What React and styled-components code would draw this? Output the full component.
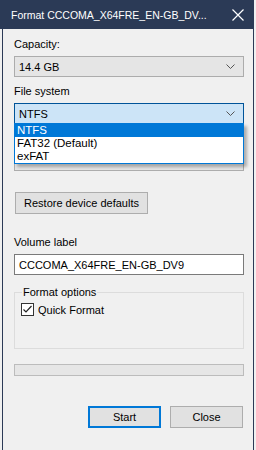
import React from 'react';
import styled, { createGlobalStyle } from 'styled-components';

const GlobalStyle = createGlobalStyle`
  html, body {
    margin: 0;
    padding: 0;
    background: #f0f0f0;
  }
  body {
    font-family: "Liberation Sans", Arial, sans-serif;
    font-size: 11px;
    color: #000;
  }
`;

const Window = styled.div`
  width: 252px;
  height: 450px;
  box-sizing: border-box;
  margin-left: 2px;
  border-left: 1px solid #2b3a56;
  border-right: 1px solid #2b3a56;
  background: #f0f0f0;
  display: flex;
  flex-direction: column;
`;

const TitleBar = styled.div`
  height: 29px;
  margin-left: -3px;
  margin-right: -1px;
  background: #2b3a56;
  color: #fff;
  display: flex;
  align-items: center;
  justify-content: space-between;
  padding: 0 10px 0 11px;
  font-size: 10.5px;
  white-space: nowrap;
`;

const Body = styled.div`
  padding: 7px 9px 0 11px;
  display: flex;
  flex-direction: column;
  position: relative;
`;

const Label = styled.div`
  height: 17px;
  line-height: 17px;
  margin-top: ${(p) => p.$top || 0}px;
  margin-bottom: 3px;
  visibility: ${(p) => (p.$covered ? 'hidden' : 'visible')};
`;

const Combo = styled.div`
  height: 21px;
  box-sizing: border-box;
  border: 1px solid ${(p) => (p.$focused ? '#005499' : '#acacac')};
  background: ${(p) => (p.$focused ? '#cce4f7' : '#e5e5e5')};
  display: flex;
  align-items: center;
  justify-content: space-between;
  padding: 0 8px 0 4px;
`;

const DropList = styled.div`
  position: absolute;
  left: 11px;
  right: 9px;
  top: 94px;
  box-sizing: border-box;
  border: 1px solid #0078d7;
  background: #fff;
  box-shadow: 3px 3px 3px rgba(0, 0, 0, 0.28);
  z-index: 2;
`;

const Option = styled.div`
  height: 13px;
  line-height: 13px;
  padding-left: 2px;
  font-size: 11.5px;
  background: ${(p) => (p.$selected ? '#0078d7' : 'transparent')};
  color: ${(p) => (p.$selected ? '#fff' : '#000')};
`;

const Button = styled.button`
  font: inherit;
  height: 22px;
  box-sizing: border-box;
  border: ${(p) => (p.$default ? '2px solid #0078d7' : '1px solid #adadad')};
  background: #e1e1e1;
  color: #000;
  padding: 0;
  width: ${(p) => p.$width}px;
`;

const RestoreRow = styled.div`
  margin-top: 21px;
  display: flex;
  padding-left: 1px;
`;

const TextInput = styled.div`
  height: 21px;
  box-sizing: border-box;
  border: 1px solid #7a7a7a;
  background: #fff;
  display: flex;
  align-items: center;
  padding-left: 4px;
`;

const Group = styled.fieldset`
  margin: 10px 0 0;
  padding: 2px 6px 0;
  height: 64px;
  box-sizing: border-box;
  border: 1px solid #dcdcdc;
  border-radius: 0;
`;

const Legend = styled.legend`
  padding: 0 1px;
  margin-left: 1px;
  line-height: 15px;
`;

const CheckRow = styled.div`
  display: flex;
  align-items: center;
  gap: 4px;
  margin-top: 1px;
`;

const Box = styled.span`
  width: 13px;
  height: 13px;
  box-sizing: border-box;
  border: 1px solid #333;
  background: #fff;
  display: flex;
  align-items: center;
  justify-content: center;
`;

const Progress = styled.div`
  margin-top: 15px;
  height: 12px;
  box-sizing: border-box;
  border: 1px solid #bcbcbc;
  background: #e6e6e6;
`;

const Footer = styled.div`
  margin-top: 30px;
  display: flex;
  justify-content: flex-end;
  gap: 9px;
  padding-right: 1px;
`;

const Chevron = () => (
  <svg width="9" height="5" viewBox="0 0 9 5">
    <path d="M0.5 0.5 L4.5 4.5 L8.5 0.5" fill="none" stroke="#555" strokeWidth="1" />
  </svg>
);

const CloseIcon = () => (
  <svg width="12" height="12" viewBox="0 0 12 12">
    <path d="M0.5 0.5 L11.5 11.5 M11.5 0.5 L0.5 11.5" stroke="#fff" strokeWidth="1.2" />
  </svg>
);

const Check = () => (
  <svg width="11" height="11" viewBox="0 0 11 11">
    <path d="M1.5 5.5 L4 8 L9.5 2" fill="none" stroke="#222" strokeWidth="1.2" />
  </svg>
);

const App = () => {
  return (
    <>
      <GlobalStyle />
      <Window>
        <TitleBar>
          <span>Format CCCOMA_X64FRE_EN-GB_DV...</span>
          <CloseIcon />
        </TitleBar>
        <Body>
          <Label>Capacity:</Label>
          <Combo>
            <span>14.4 GB</span>
            <Chevron />
          </Combo>
          <Label $top={6}>File system</Label>
          <Combo $focused>
            <span>NTFS</span>
            <Chevron />
          </Combo>
          <Label $top={6} $covered>Allocation unit size</Label>
          <Combo>
            <span></span>
            <Chevron />
          </Combo>
          <DropList>
            <Option $selected>NTFS</Option>
            <Option>FAT32 (Default)</Option>
            <Option>exFAT</Option>
          </DropList>
          <RestoreRow>
            <Button $width={133}>Restore device defaults</Button>
          </RestoreRow>
          <Label $top={20}>Volume label</Label>
          <TextInput>CCCOMA_X64FRE_EN-GB_DV9</TextInput>
          <Group>
            <Legend>Format options</Legend>
            <CheckRow>
              <Box>
                <Check />
              </Box>
              <span>Quick Format</span>
            </CheckRow>
          </Group>
          <Progress />
          <Footer>
            <Button $default $width={73}>Start</Button>
            <Button $width={73}>Close</Button>
          </Footer>
        </Body>
      </Window>
    </>
  );
};

export default App;
